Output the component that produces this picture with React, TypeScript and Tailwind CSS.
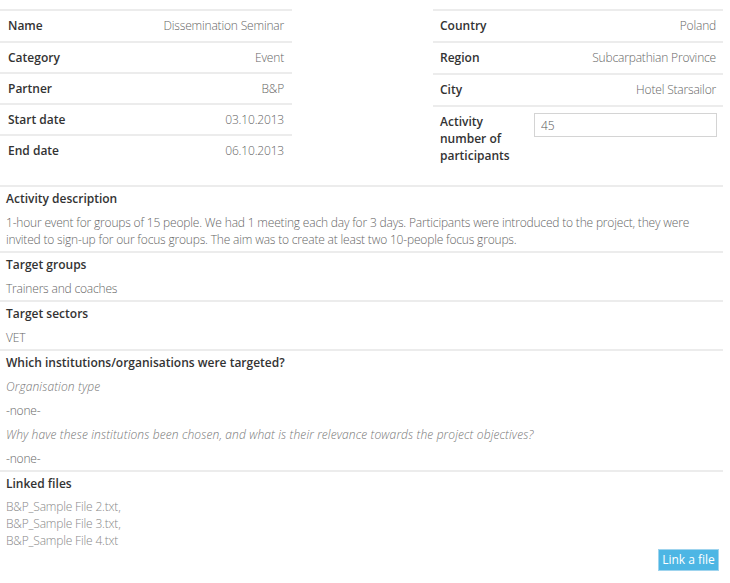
import React from "react";

const left = [
  ["Name", "Dissemination Seminar"],
  ["Category", "Event"],
  ["Partner", "B&P"],
  ["Start date", "03.10.2013"],
  ["End date", "06.10.2013"],
];

const right = [
  ["Country", "Poland"],
  ["Region", "Subcarpathian Province"],
  ["City", "Hotel Starsailor"],
];

const light = "font-light text-[#666] tracking-[-0.18px]";

function Section({ title, children }: { title: string; children: React.ReactNode }) {
  return (
    <div className="border-t-2 border-[#ececec] px-[6px] pt-[3px] pb-[3px]">
      <div className="font-semibold text-[#333] leading-[17px]">{title}</div>
      {children}
    </div>
  );
}

export default function App() {
  return (
    <div className="w-[730px] h-[583px] bg-white text-[12px] font-['Open_Sans',sans-serif] pt-[9px] pr-[7px]">
      <div className="flex justify-between h-[176px]">
        <div className="w-[292px]">
          {left.map(([k, v], i) => (
            <div
              key={k}
              className={`flex justify-between items-center px-2 border-t-2 border-[#ececec] ${i === 0 ? "h-[32px]" : "h-[31px]"}`}
            >
              <span className="font-semibold text-[#333]">{k}</span>
              <span className={light}>{v}</span>
            </div>
          ))}
        </div>
        <div className="w-[290px]">
          {right.map(([k, v]) => (
            <div key={k} className="flex justify-between items-center px-[7px] border-t-2 border-[#ececec] h-[32px]">
              <span className="font-semibold text-[#333]">{k}</span>
              <span className={light}>{v}</span>
            </div>
          ))}
          <div className="flex border-t-2 border-[#ececec] pl-[7px] pr-[6px] pt-[6px]">
            <div className="w-[94px] font-semibold text-[#333] leading-[17px]">
              Activity
              <br />
              number of
              <br />
              participants
            </div>
            <input
              defaultValue="45"
              className="flex-1 h-[24px] border border-[#d4d4d4] px-[6px] font-light text-[#555] outline-none"
            />
          </div>
        </div>
      </div>

      <Section title="Activity description">
        <p className={`mt-[7px] leading-[17px] ${light}`}>
          1-hour event for groups of 15 people. We had 1 meeting each day for 3 days. Participants were introduced to the
          project, they were invited to sign-up for our focus groups. The aim was to create at least two 10-people focus
          groups.
        </p>
      </Section>
      <Section title="Target groups">
        <p className={`mt-[7px] leading-[17px] ${light}`}>Trainers and coaches</p>
      </Section>
      <Section title="Target sectors">
        <p className={`mt-[7px] leading-[17px] ${light}`}>VET</p>
      </Section>
      <Section title="Which institutions/organisations were targeted?">
        <p className="mt-[7px] font-light italic text-[#777] leading-[17px] tracking-[0.12px]">Organisation type</p>
        <p className={`mt-[7px] leading-[17px] ${light}`}>-none-</p>
        <p className="mt-[7px] font-light italic text-[#777] leading-[17px] tracking-[0.12px]">
          Why have these institutions been chosen, and what is their relevance towards the project objectives?
        </p>
        <p className={`mt-[7px] leading-[17px] ${light}`}>-none-</p>
      </Section>
      <div className="border-t-2 border-[#ececec] px-[6px] pt-[3px]">
        <div className="font-semibold text-[#333] leading-[17px]">Linked files</div>
        <div className="mt-[6px] font-light text-[#888] leading-[17px] tracking-[-0.18px]">
          <div>B&amp;P_Sample File 2.txt,</div>
          <div>B&amp;P_Sample File 3.txt,</div>
          <div>B&amp;P_Sample File 4.txt</div>
        </div>
        <div className="flex justify-end mt-0">
          <button className="h-[22px] w-[61px] bg-[#4db6e4] text-white text-[12px] font-normal border border-[#9fd4ee] -mr-[2px]">
            Link a file
          </button>
        </div>
      </div>
    </div>
  );
}
